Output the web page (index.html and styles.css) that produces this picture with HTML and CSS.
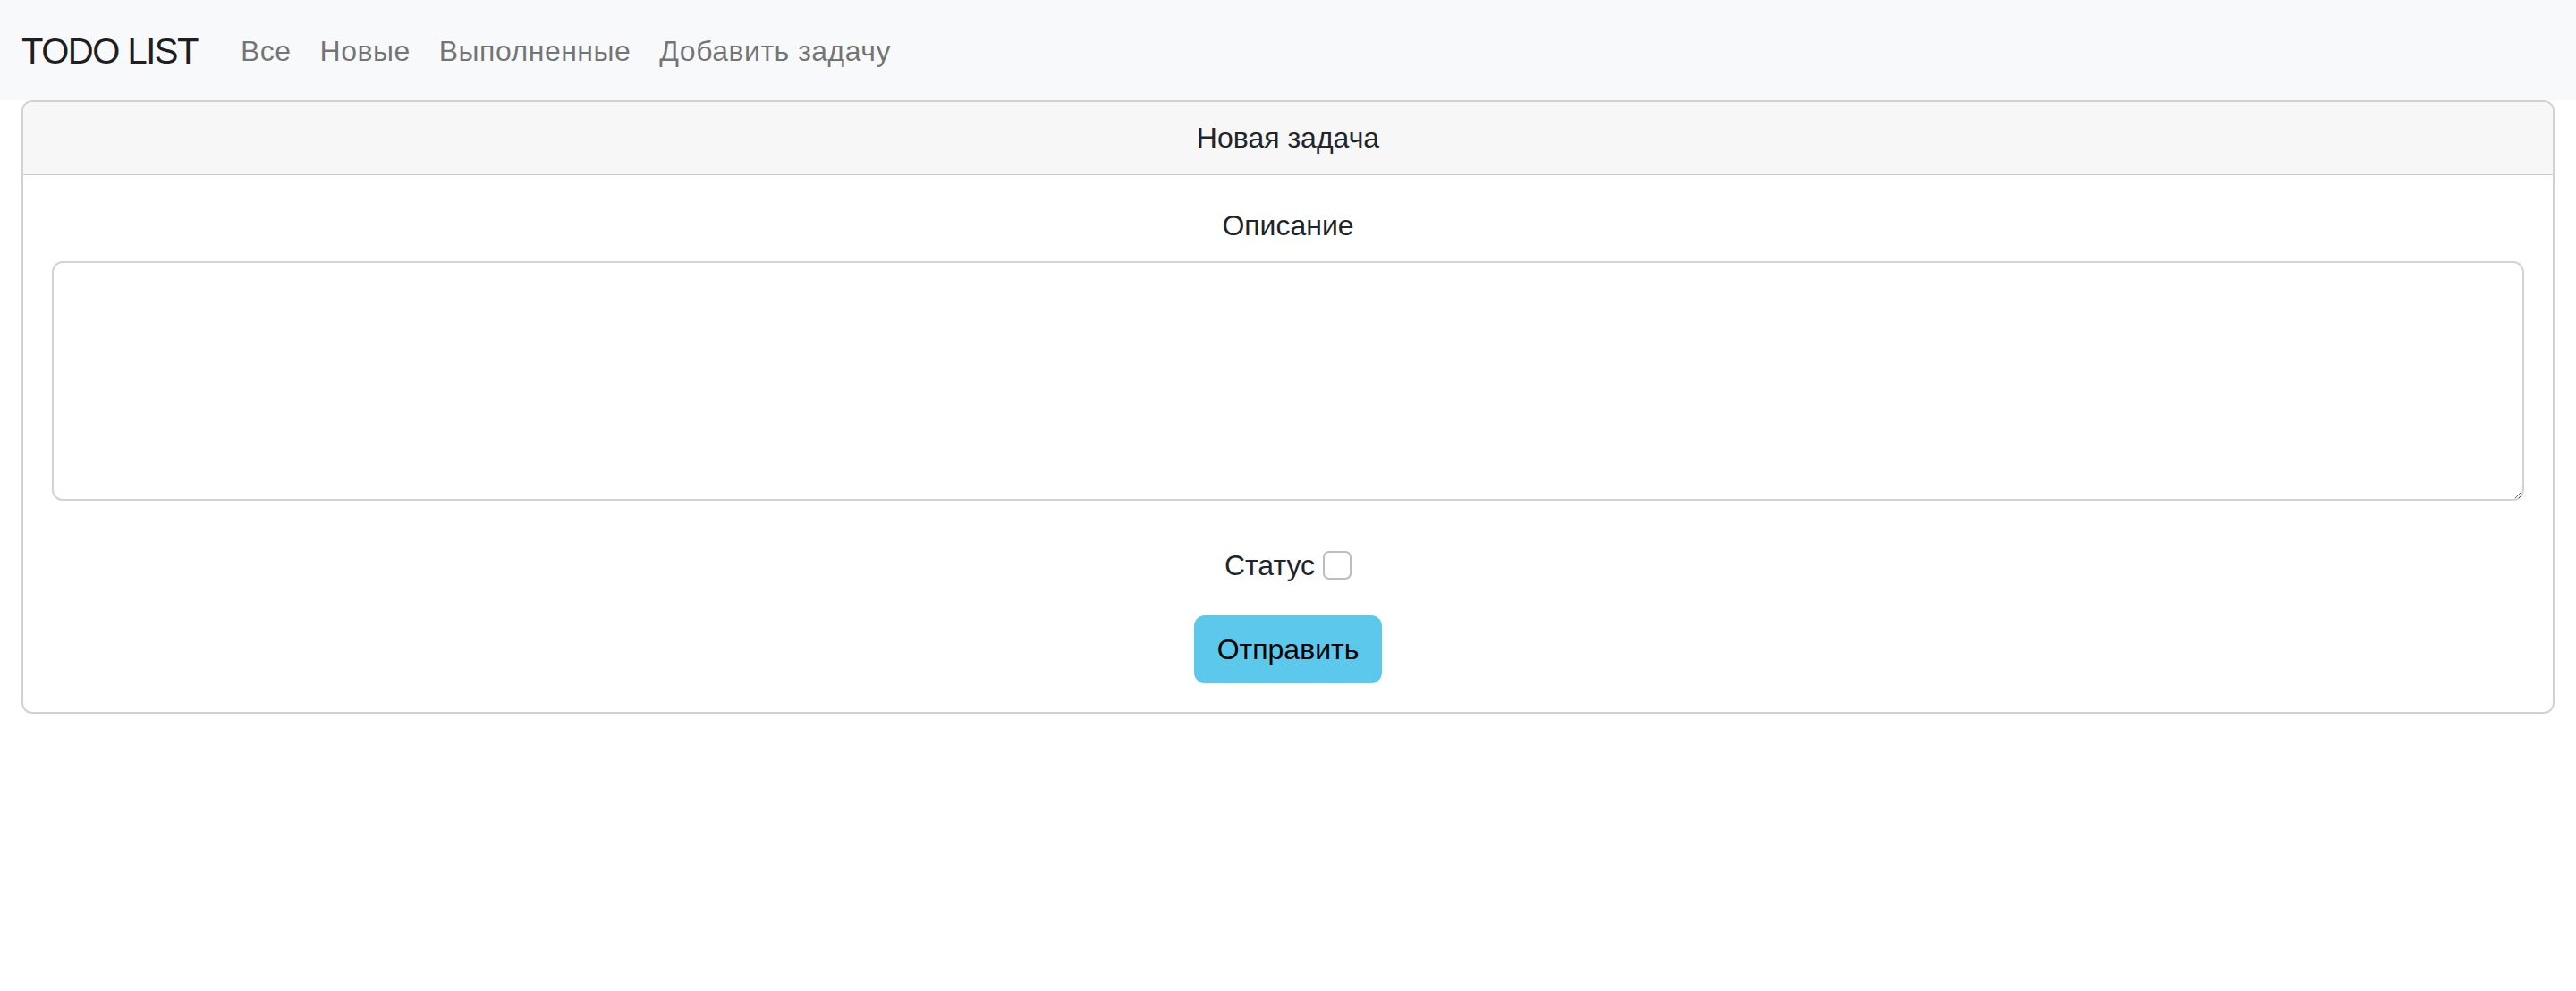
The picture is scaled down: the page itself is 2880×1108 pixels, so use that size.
FILE: index.html
```html
<!DOCTYPE html>
<html lang="ru">
<head>
<meta charset="utf-8">
<title>TODO LIST</title>
<link rel="stylesheet" href="styles.css">
</head>
<body>
<nav class="navbar">
  <div class="navbar-inner">
    <a class="brand" href="#">TODO LIST</a>
    <ul class="nav">
      <li><a class="nav-link" href="#">Все</a></li>
      <li><a class="nav-link" href="#">Новые</a></li>
      <li><a class="nav-link" href="#">Выполненные</a></li>
      <li><a class="nav-link" href="#">Добавить задачу</a></li>
    </ul>
  </div>
</nav>
<main class="container">
  <div class="card">
    <div class="card-header">Новая задача</div>
    <form class="card-body">
      <div class="field">
        <label class="form-label" for="desc">Описание</label>
        <textarea id="desc" class="form-control" rows="5"></textarea>
      </div>
      <div class="check-row">
        <label for="status">Статус</label>
        <input type="checkbox" id="status" class="check">
      </div>
      <div class="actions">
        <button type="button" class="btn">Отправить</button>
      </div>
    </form>
  </div>
</main>
</body>
</html>
```

FILE: styles.css
```css
* { box-sizing: border-box; }
html, body {
  margin: 0;
  padding: 0;
}
body {
  font-family: "Liberation Sans", Arial, Helvetica, sans-serif;
  font-size: 32px;
  line-height: 48px;
  color: #212529;
  background: #ffffff;
}
.navbar {
  background: #f8f9fa;
  padding: 16px 0;
}
.navbar-inner {
  display: flex;
  align-items: center;
  padding: 0 24px;
}
.brand {
  font-size: 40px;
  line-height: 60px;
  padding: 11px 0 9px;
  margin-right: 32px;
  color: rgba(0, 0, 0, 0.9);
  text-decoration: none;
  letter-spacing: -1.5px;
}
.nav {
  display: flex;
  list-style: none;
  margin: 0;
  padding: 0;
}
.nav-link {
  display: block;
  padding: 17px 16px 15px;
  color: rgba(0, 0, 0, 0.55);
  text-decoration: none;
  letter-spacing: 0.5px;
}
.container {
  padding: 0 24px;
}
.card {
  border: 2px solid rgba(0, 0, 0, 0.175);
  border-radius: 12px;
  overflow: hidden;
}
.card-header {
  background: #f7f7f7;
  border-bottom: 2px solid rgba(0, 0, 0, 0.175);
  padding: 16px 32px;
  text-align: center;
}
.card-body {
  padding: 32px;
  margin: 0;
}
.field {
  display: flex;
  flex-direction: column;
}
.form-label {
  text-align: center;
  margin-bottom: 16px;
}
.form-control {
  display: block;
  width: 100%;
  font: inherit;
  line-height: 48px;
  padding: 12px 24px;
  border: 2px solid #ced4da;
  border-radius: 12px;
  color: #212529;
  background: #fff;
  margin: 0;
}
.check-row {
  display: flex;
  justify-content: center;
  align-items: center;
  gap: 9px;
  margin-top: 48px;
}
.check {
  appearance: none;
  -webkit-appearance: none;
  width: 32px;
  height: 32px;
  margin: 0;
  border: 2px solid #bdbdbd;
  border-radius: 7px;
  background: #fff;
}
.actions {
  display: flex;
  justify-content: center;
  margin-top: 32px;
}
.btn {
  font: inherit;
  line-height: 48px;
  padding: 12px 24px;
  border: 2px solid #5bc8ec;
  background: #5bc8ec;
  color: #000;
  border-radius: 12px;
}
```
